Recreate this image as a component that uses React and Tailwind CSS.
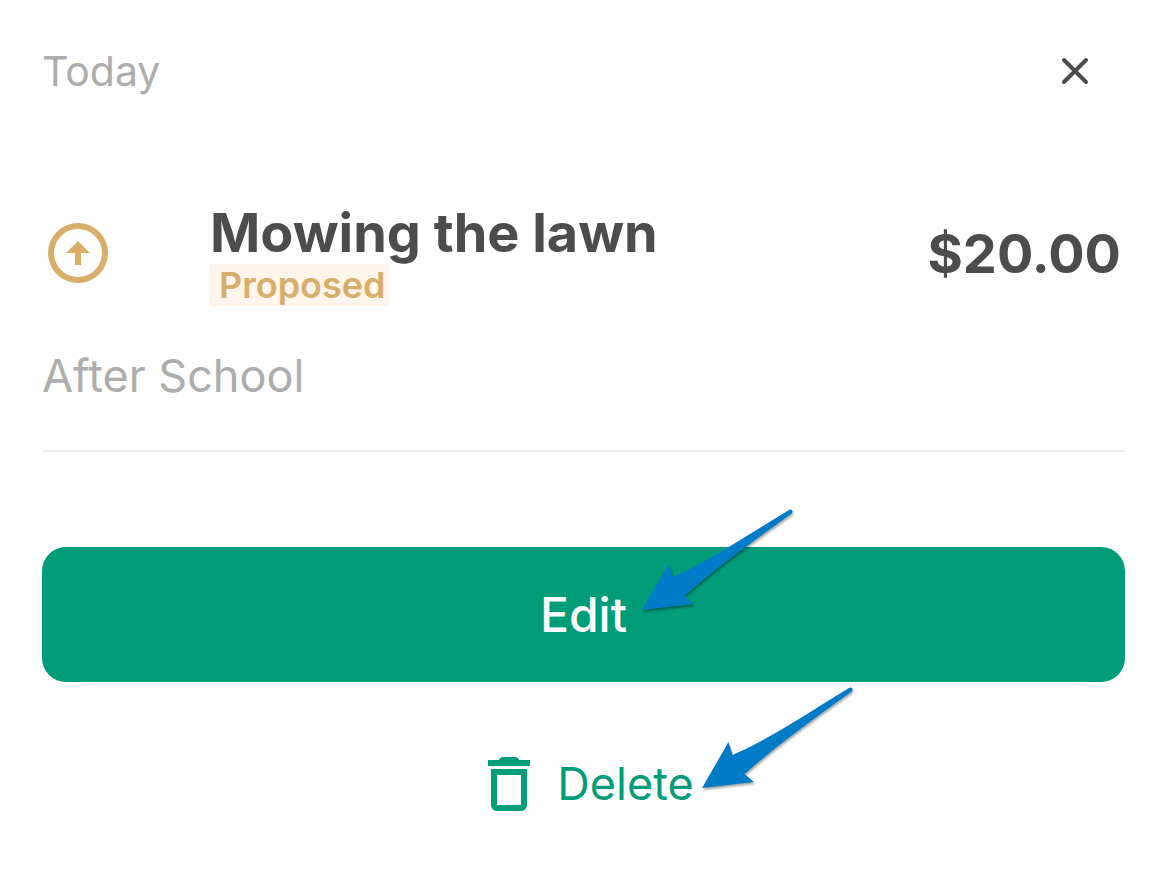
import React from "react";

const chore = {
  day: "Today",
  title: "Mowing the lawn",
  status: "Proposed",
  amount: "$20.00",
  note: "After School",
};

function CloseIcon() {
  return (
    <svg viewBox="0 0 32 32" className="size-8" fill="none" stroke="currentColor" strokeWidth="4" strokeLinecap="round" aria-hidden="true">
      <path d="M5 5l22 22M27 5L5 27" />
    </svg>
  );
}

function ProposedIcon() {
  return (
    <svg viewBox="0 0 24 24" className="mb-1 size-[72px] shrink-0 text-[#d8ae68]" fill="currentColor" aria-hidden="true">
      <path d="M12 2a10 10 0 1 0 0 20 10 10 0 0 0 0-20zm0 2a8 8 0 1 1 0 16 8 8 0 0 1 0-16z" />
      <path d="M12 8l4 4h-3v4h-2v-4H8z" />
    </svg>
  );
}

function TrashIcon() {
  return (
    <svg viewBox="0 0 24 24" className="size-[72px] shrink-0" fill="currentColor" aria-hidden="true">
      <path d="M19 4h-3.5l-.71-.71c-.18-.18-.44-.29-.7-.29H9.91c-.26 0-.52.11-.7.29L8.5 4H5v2h14V4z" />
      <path d="M6 19c0 1.1.9 2 2 2h8c1.1 0 2-.9 2-2V7H6v12zM8 9h8v10H8V9z" />
    </svg>
  );
}

// Callout arrow, sits on top of the button it points at
function Pointer({ className }) {
  return (
    <svg viewBox="0 0 160 112" className={`pointer-events-none absolute left-1/2 h-[112px] w-[160px] drop-shadow-[1px_2px_1px_rgba(0,0,0,0.35)] ${className}`} fill="#007bc7" aria-hidden="true">
      <path d="M2 105L28.500 59L32.500 72C66 58 108 30 149 5Q151 4 152.300 5.500Q153 7.500 151.500 8.500C112 37 76 63 44.500 91L54 99Z" />
    </svg>
  );
}

export default function App() {
  return (
    <main className="min-h-screen bg-white pr-11 pl-[42px] pt-10 pb-14 font-['Inter','Liberation_Sans',sans-serif] text-[#4c4c4c]">
      <header className="flex h-[62px] items-center justify-between pr-[34px]">
        <p className="text-[41px] leading-none text-[#adadad]">{chore.day}</p>
        <button type="button" aria-label="Close" className="cursor-pointer">
          <CloseIcon />
        </button>
      </header>

      <section className="mt-[102px] flex items-center">
        <ProposedIcon />
        <div className="ml-24 flex-1">
          <h1 className="mb-[3px] text-[54px] leading-[57px] font-bold">{chore.title}</h1>
          <span className="block w-fit bg-[#fff5ed] pr-[3px] pl-[9px] text-[36px] leading-[42px] font-semibold text-[#d8ae68]">{chore.status}</span>
        </div>
        <p className="mb-0.5 pr-1 text-[54px] leading-[60px] font-bold">{chore.amount}</p>
      </section>

      <p className="mt-10 text-[45px] leading-[60px] text-[#adadad]">{chore.note}</p>
      <hr className="mt-11 border-t-2 border-[#eeeeee]" />

      <div className="relative mt-[95px]">
        <button type="button" className="h-[135px] w-full cursor-pointer rounded-3xl bg-[#009d78] text-[48px] font-medium text-white">Edit</button>
        <Pointer className="-top-[42px] ml-14" />
      </div>

      <div className="relative mt-[66px] flex justify-center">
        <button type="button" className="flex cursor-pointer items-center gap-3 text-[45px] leading-[60px] text-[#009d78]">
          <TrashIcon />
          Delete
        </button>
        <Pointer className="-top-[65px] ml-[116px]" />
      </div>
    </main>
  );
}
